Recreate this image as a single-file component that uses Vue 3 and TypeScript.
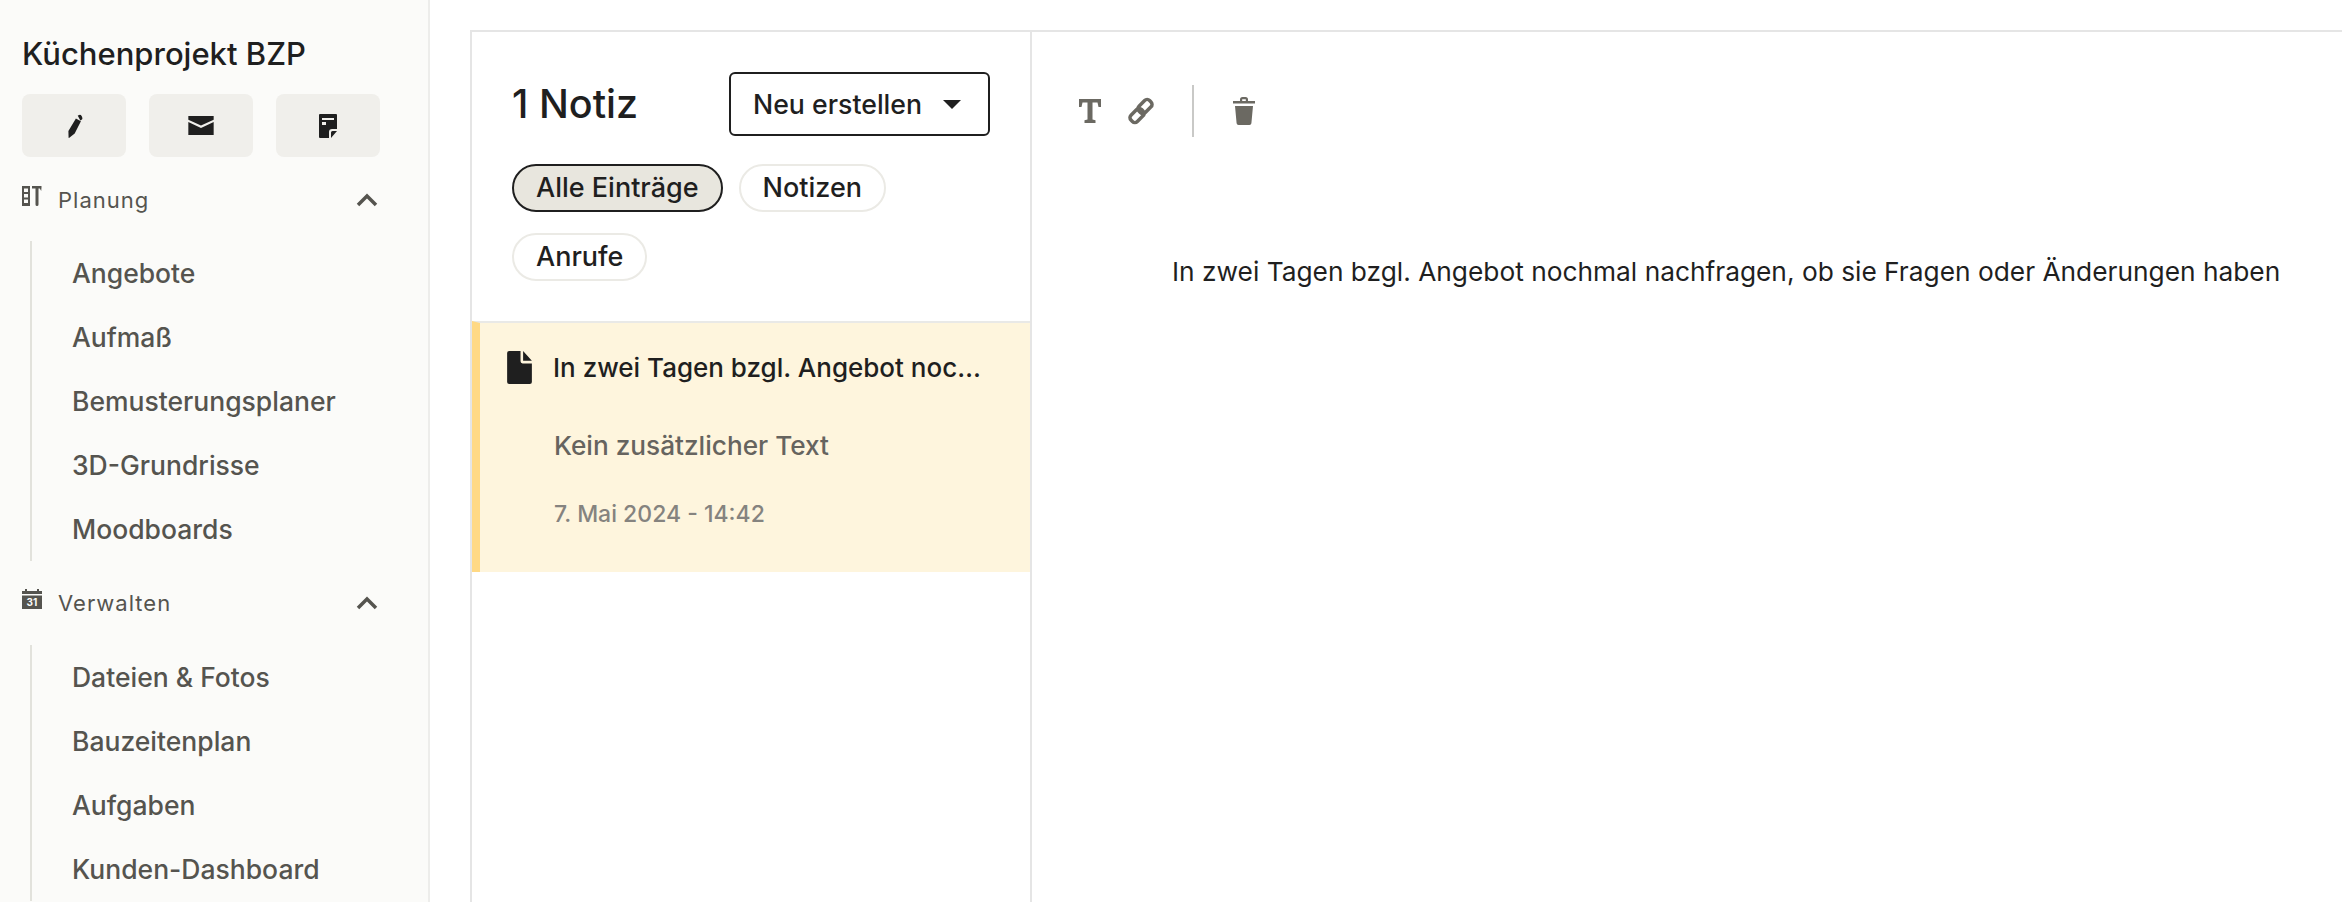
<template>
  <div class="page">
    <aside class="sidebar">
      <h1 class="project">Küchenprojekt BZP</h1>
      <div class="quick">
        <button class="quick-btn">
          <svg class="icon-pencil" viewBox="0 0 24 24" width="24" height="24"><path d="M17.600 1.200a2.200 2.200 0 0 1 3 .9l.6 1.100a2.200 2.200 0 0 1-1 2.900l-.9.400-2.600-4.900zM14.900 4.600l5 2.600-6.200 12.400L8 24l-.4-.2-.2-6.800z" /></svg>
        </button>
        <button class="quick-btn">
          <svg viewBox="0 0 24 18" width="26" height="19"><path d="M0 0h24v3.500l-12 5.500L0 3.500zM0 5.800l12 5.600 12-5.600V18H0z" /></svg>
        </button>
        <button class="quick-btn">
          <svg viewBox="0 0 18 24" width="18" height="24"><path fill-rule="evenodd" d="M1 0h16a1 1 0 0 1 1 1v14h-5a3 3 0 0 0-3 3v6H1a1 1 0 0 1-1-1V1a1 1 0 0 1 1-1zM3 4v2h12V4zm0 4v3h4V8zM12 24v-5.500a1.500 1.500 0 0 1 1.500-1.500H18z" /></svg>
        </button>
      </div>

      <section v-for="group in groups" :key="group.title" class="group">
        <div class="group-head">
          <svg v-if="group.icon === 'tools'" class="group-icon" viewBox="0 0 20 20" width="20" height="20">
            <path fill-rule="evenodd" d="M0 0h8v20H0zM2 2.500v3.500h4V2.500zm0 5.500v3.500h4V8zm0 5.500V17h4v-3.500z" />
            <path d="M10 0h9.500v1.500l-.3 3.500-1.400-2.500H16.500v16a1.500 1.500 0 0 1-3 0v-16H10z" />
          </svg>
          <svg v-else class="group-icon" viewBox="0 0 20 20" width="20" height="20">
            <path d="M3 0h2v2h10V0h2v2h3v3H0V2h3zM0 6.500h20V20H0z" />
            <text x="10" y="17" class="cal-day">31</text>
          </svg>
          <span class="group-title">{{ group.title }}</span>
          <svg class="chevron" viewBox="0 0 22 14" width="22" height="14"><path d="M2 12 11 3l9 9" /></svg>
        </div>
        <ul class="group-items">
          <li v-for="item in group.items" :key="item">{{ item }}</li>
        </ul>
      </section>
    </aside>

    <main class="main">
      <div class="panel">
        <section class="list">
          <header class="list-head">
            <div class="list-top">
              <h2 class="count">1 Notiz</h2>
              <button class="create">
                Neu erstellen
                <span class="caret"></span>
              </button>
            </div>
            <div class="chips">
              <span v-for="chip in chips" :key="chip" class="chip" :class="{ active: chip === activeChip }">{{ chip }}</span>
            </div>
          </header>
          <article class="note">
            <div class="note-title">
              <svg viewBox="0 0 24 32" width="25" height="33"><path d="M2 0h11v10a2 2 0 0 0 2 2h9v18a2 2 0 0 1-2 2H2a2 2 0 0 1-2-2V2a2 2 0 0 1 2-2zM15.500 0 24 9.500h-8.500z" /></svg>
              <span>{{ noteText }}</span>
            </div>
            <p class="note-body">Kein zusätzlicher Text</p>
            <p class="note-date">7. Mai 2024 - 14:42</p>
          </article>
        </section>

        <section class="editor">
          <div class="toolbar">
            <svg viewBox="0 0 22 26" width="22" height="26"><path d="M0 1h22v8h-2.500l-1-4.500H13.500V21.500l3 .8V25H5.500v-2.700l3-.8V4.500H3.500L2.500 9H0z" /></svg>
            <svg class="tool-link" viewBox="0 0 28 28" width="28" height="28">
              <rect x="2.500" y="14" width="15" height="9" rx="3.500" transform="rotate(-45 10 18.500)" />
              <rect x="10.500" y="5" width="15" height="9" rx="3.500" transform="rotate(-45 18 9.500)" />
            </svg>
            <span class="tool-sep"></span>
            <svg viewBox="0 0 22 28" width="22" height="28"><path d="M7 4V2.500A2.500 2.500 0 0 1 9.500 0h3A2.500 2.500 0 0 1 15 2.500V4h7v2.500H0V4zm2.200 0h3.600V2.200H9.200zM2 9h18l-1.600 17.200A2 2 0 0 1 16.400 28H5.600a2 2 0 0 1-2-1.800z" /></svg>
          </div>
          <p class="editor-text">{{ noteText }}</p>
        </section>
      </div>
    </main>
  </div>
</template>

<script setup lang="ts">
interface NavGroup {
  title: string
  icon: 'tools' | 'calendar'
  items: string[]
}

const groups: NavGroup[] = [
  {
    title: 'Planung',
    icon: 'tools',
    items: ['Angebote', 'Aufmaß', 'Bemusterungsplaner', '3D-Grundrisse', 'Moodboards']
  },
  {
    title: 'Verwalten',
    icon: 'calendar',
    items: ['Dateien & Fotos', 'Bauzeitenplan', 'Aufgaben', 'Kunden-Dashboard']
  }
]

const chips = ['Alle Einträge', 'Notizen', 'Anrufe']
const activeChip = 'Alle Einträge'
const noteText = 'In zwei Tagen bzgl. Angebot nochmal nachfragen, ob sie Fragen oder Änderungen haben'
</script>

<style>
html,
body {
  margin: 0;
  background: #fff;
  overflow: hidden;
}
</style>

<style scoped>
.page {
  display: flex;
  height: 902px;
  overflow: hidden;
  font-family: "Inter", "Noto Sans", sans-serif;
  color: #1f1f1f;
}

.sidebar {
  width: 430px;
  flex: none;
  box-sizing: border-box;
  padding: 36px 48px 0 22px;
  background: #fbfbf9;
  border-right: 2px solid #ededeb;
}

.project {
  margin: 0;
  font-size: 31px;
  line-height: 36px;
  font-weight: 500;
}

.quick {
  display: flex;
  justify-content: space-between;
  margin-top: 22px;
}

.quick-btn {
  display: flex;
  align-items: center;
  justify-content: center;
  width: 104px;
  height: 63px;
  padding: 0;
  border: 0;
  border-radius: 8px;
  background: #f0efeb;
}

.quick-btn svg {
  fill: #1f1f1f;
}

.quick-btn .icon-pencil {
  margin-left: -3px;
}

.group-head {
  display: flex;
  align-items: center;
  height: 40px;
  margin-top: 23px;
}

.group-icon {
  flex: none;
  fill: #55544f;
  margin-top: -8px;
}

.cal-day {
  font: 700 10px "Inter", sans-serif;
  fill: #fbfbf9;
  text-anchor: middle;
}

.group-title {
  margin-left: 16px;
  font-size: 22px;
  letter-spacing: 1px;
  color: #55544f;
}

.chevron {
  margin-left: auto;
  margin-right: 2px;
  fill: none;
  stroke: #55544f;
  stroke-width: 3.500;
}

.group-items {
  list-style: none;
  margin: 21px 0 0 8px;
  padding: 0 0 0 40px;
  border-left: 2px solid #e2e2dc;
}

.group-items li {
  height: 64px;
  line-height: 64px;
  font-size: 26.500px;
  font-weight: 500;
  color: #55544f;
}

.group + .group .group-head {
  margin-top: 22px;
}

.group + .group .group-items {
  margin-top: 22px;
}

.main {
  flex: 1;
  min-width: 0;
  padding: 30px 0 0 40px;
}

.panel {
  display: flex;
  height: 872px;
  border-top: 2px solid #e5e5e5;
  border-left: 2px solid #e5e5e5;
  box-sizing: border-box;
}

.list {
  width: 558px;
  flex: none;
  border-right: 2px solid #e5e5e5;
}

.list-head {
  box-sizing: border-box;
  height: 289px;
  padding: 40px 40px 0 40px;
}

.list-top {
  display: flex;
  align-items: center;
  justify-content: space-between;
}

.count {
  margin: 0;
  font-size: 39.500px;
  font-weight: 500;
}

.create {
  display: flex;
  align-items: center;
  width: 261px;
  height: 64px;
  box-sizing: border-box;
  padding: 0 0 0 22px;
  border: 2px solid #1f1f1f;
  border-radius: 6px;
  background: #fff;
  font: 500 26.700px "Inter", "Noto Sans", sans-serif;
  color: #1f1f1f;
}

.caret {
  margin-left: 21px;
  border-left: 9px solid transparent;
  border-right: 9px solid transparent;
  border-top: 9px solid #1f1f1f;
}

.chips {
  display: flex;
  flex-wrap: wrap;
  gap: 21px 16px;
  margin-top: 28px;
}

.chip {
  box-sizing: border-box;
  height: 48px;
  padding: 0 22px;
  border: 2px solid #ebeae5;
  border-radius: 24px;
  font-size: 27px;
  font-weight: 500;
  line-height: 44px;
}

.chip.active {
  background: #e8e6de;
  border-color: #1f1f1f;
}

.note {
  box-sizing: border-box;
  height: 251px;
  padding: 28px 0 0 27px;
  background: #fef5dd;
  border-top: 2px solid #e9e9e7;
  border-left: 8px solid #ffd985;
}

.note-title {
  display: flex;
  align-items: center;
  gap: 21px;
  font-size: 26px;
  font-weight: 500;
}

.note-title svg {
  flex: none;
  fill: #1f1f1f;
}

.note-title span {
  width: 433px;
  overflow: hidden;
  white-space: nowrap;
  text-overflow: ellipsis;
}

.note-body {
  margin: 42px 0 0 47px;
  font-size: 26.200px;
  font-weight: 500;
  line-height: 40px;
  color: #66645f;
}

.note-date {
  margin: 32px 0 0 47px;
  font-size: 23px;
  font-weight: 500;
  line-height: 32px;
  color: #85837f;
}

.editor {
  flex: 1;
  min-width: 0;
}

.toolbar {
  display: flex;
  align-items: center;
  height: 52px;
  margin-top: 53px;
  padding-left: 47px;
}

.toolbar svg {
  flex: none;
  fill: #6b6962;
}

.toolbar .tool-link {
  margin-left: 26px;
  fill: none;
  stroke: #6b6962;
  stroke-width: 3.500;
}

.tool-sep {
  width: 2px;
  height: 52px;
  margin: 0 39px 0 37px;
  background: #c9c9c7;
}

.editor-text {
  margin: 117px 0 0 140px;
  font-size: 26.300px;
  line-height: 36px;
  white-space: nowrap;
  color: #1f1f1f;
}
</style>
